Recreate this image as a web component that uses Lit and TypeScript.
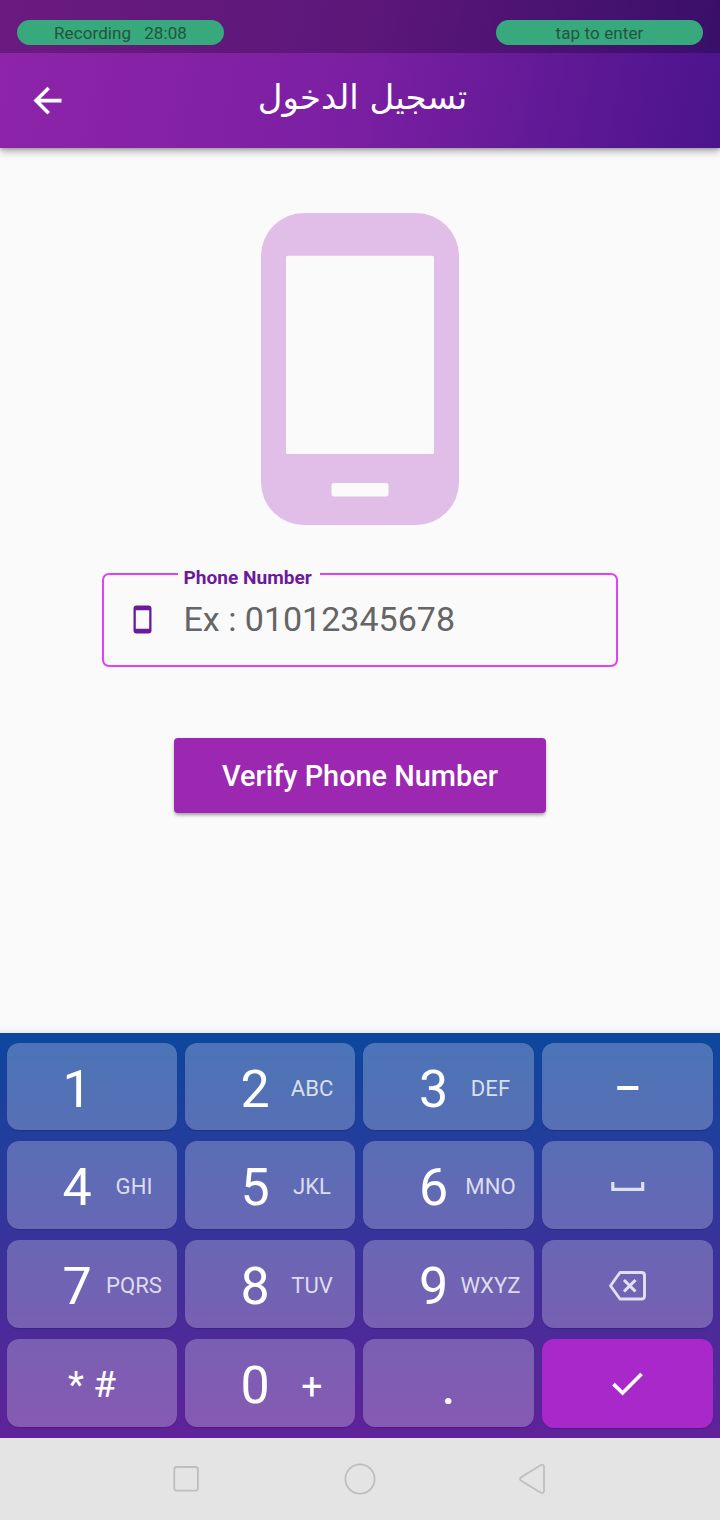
import { LitElement, html, css, svg } from "lit";
import { customElement } from "lit/decorators.js";
import { classMap } from "lit/directives/class-map.js";

interface Key {
  main?: string;
  sub?: string;
  kind?: string;
}

const KEYS: Key[] = [
  { main: "1" },
  { main: "2", sub: "ABC" },
  { main: "3", sub: "DEF" },
  { main: "–", kind: "dash" },
  { main: "4", sub: "GHI" },
  { main: "5", sub: "JKL" },
  { main: "6", sub: "MNO" },
  { kind: "space" },
  { main: "7", sub: "PQRS" },
  { main: "8", sub: "TUV" },
  { main: "9", sub: "WXYZ" },
  { kind: "delete" },
  { main: "* #", kind: "symbols" },
  { main: "0", sub: "+", kind: "zero" },
  { main: ".", kind: "dot" },
  { kind: "done" },
];

const ICONS: Record<string, unknown> = {
  space: svg`<path d="M12.800 25V32.300H42.700V25" stroke-width="3.200"/>`,
  delete: svg`<path d="M20 16.500H41.500Q44.500 16.500 44.500 19.500V40Q44.500 43 41.500 43H20L10.500 29.750Z" stroke-width="2.900" stroke-linejoin="round"/><path d="M24 24L35.500 35.500M35.500 24L24 35.500" stroke-width="3.100"/>`,
  done: svg`<path d="M13.500 28.200L22.600 37L41.500 18" stroke-width="3.700"/>`,
};

@customElement("keypad-view")
export class KeypadView extends LitElement {
  static styles = css`
    :host {
      display: block;
      height: 405px;
      box-sizing: border-box;
      padding: 10px 7px 11px;
      background: linear-gradient(#0d479e 0%, #263c9d 31%, #38339b 52%, #4d2a99 76%, #60229a 100%);
    }
    .keys {
      display: grid;
      height: 100%;
      grid-template-columns: 170px 170px 171px 171px;
      grid-template-rows: 87px 88px 88px 88px;
      column-gap: 8px;
      row-gap: 11px;
    }
    .key {
      display: grid;
      grid-template-columns: 50px 64px;
      padding-left: 45px;
      align-items: center;
      border-radius: 12px;
      background: rgba(255, 255, 255, 0.25);
      box-shadow: 0 1px 1px rgba(0, 0, 0, 0.18);
      color: #fff;
      text-align: center;
      white-space: nowrap;
    }
    .key:nth-child(4n + 3) {
      padding-left: 45.5px;
    }
    .main {
      font-size: 52px;
      line-height: 60px;
      padding-top: 6px;
    }
    .sub {
      font-size: 22.1px;
      line-height: 28px;
      padding-top: 2px;
      color: rgba(255, 255, 255, 0.78);
    }
    .key.dash,
    .key.space,
    .key.delete,
    .key.done,
    .key.symbols,
    .key.dot {
      grid-template-columns: 1fr;
      padding-left: 0;
      justify-items: center;
    }
    .dash .main,
    .symbols .main {
      font-size: 37px;
      line-height: 40px;
      padding-top: 4px;
    }
    .dash .main {
      font-size: 42px;
      font-weight: 500;
      padding-top: 5px;
    }
    .dot .main {
      font-size: 46px;
      font-weight: 500;
      padding-top: 10px;
    }
    .zero .sub {
      font-size: 37.5px;
      color: #fff;
      padding-top: 5px;
    }
    .key.done {
      height: 89px;
      background: #a928ca;
    }
    .icon {
      display: block;
      width: 56px;
      height: 56px;
      fill: none;
      stroke: rgba(255, 255, 255, 0.8);
    }
    .done .icon {
      stroke: #fff;
    }
  `;

  render() {
    return html`<div class="keys">
      ${KEYS.map((k) => {
        const icon = k.kind ? ICONS[k.kind] : undefined;
        return html`<div class=${classMap({ key: true, [k.kind ?? "digit"]: true })}>
          ${icon
            ? html`<svg class="icon" viewBox="0 0 56 56">${icon}</svg>`
            : html`<span class="main">${k.main}</span>`}
          ${k.sub ? html`<span class="sub">${k.sub}</span>` : ""}
        </div>`;
      })}
    </div>`;
  }
}

@customElement("app-root")
export class AppRoot extends LitElement {
  static styles = css`
    :host {
      display: flex;
      flex-direction: column;
      width: 720px;
      height: 1520px;
      overflow: hidden;
      background: #fafafa;
      font-family: Roboto, "Noto Sans", sans-serif;
    }
    .top {
      flex: none;
      height: 148px;
      background: linear-gradient(101.6deg, #8e24aa, #7b1fa2 50%, #4a148c);
      box-shadow: 0 4px 8px rgba(0, 0, 0, 0.24), 0 1px 4px rgba(0, 0, 0, 0.26);
    }
    .status {
      display: flex;
      justify-content: space-between;
      align-items: flex-start;
      height: 53px;
      box-sizing: border-box;
      padding: 20px 17px 0;
      background: rgba(0, 0, 0, 0.25);
    }
    .pill {
      width: 207px;
      height: 25px;
      border-radius: 13px;
      background: #37a97c;
      color: #245443;
      font-size: 17px;
      line-height: 27px;
      letter-spacing: 0.1px;
      text-align: center;
      white-space: pre;
    }
    .bar {
      display: grid;
      grid-template-columns: 96px 1fr 96px;
      height: 95px;
      align-items: center;
      color: #fff;
    }
    .back {
      width: 40px;
      height: 40px;
      margin-left: 28px;
    }
    .title {
      margin: 0;
      padding: 0 0 7px 5px;
      font: 400 34px/50px "DejaVu Sans", sans-serif;
      text-align: center;
      white-space: nowrap;
    }
    .body {
      flex: 1;
      display: flex;
      flex-direction: column;
      align-items: center;
      padding-top: 65px;
      box-shadow: inset 0 -9px 8px -8px rgba(0, 0, 0, 0.09);
    }
    .phone {
      display: block;
      width: 198px;
      height: 312px;
    }
    .field {
      box-sizing: border-box;
      width: 516px;
      height: 108px;
      min-inline-size: 0;
      margin: 34px 0 0;
      padding: 0 0 0 27px;
      border: 2px solid #df43f5;
      border-radius: 7px;
    }
    .legend {
      margin-left: 46.5px;
      padding: 8px 8px 0 6px;
      color: #6a1b9a;
      font-size: 19.1px;
      font-weight: 700;
      line-height: 22px;
    }
    .entry {
      display: flex;
      align-items: center;
      gap: 28.5px;
      height: 60px;
    }
    .mini {
      width: 24px;
      height: 30px;
    }
    .hint {
      color: #656565;
      font-size: 34px;
      line-height: 40px;
      white-space: nowrap;
    }
    .verify {
      width: 372px;
      height: 75px;
      margin-top: 71px;
      padding: 2px 0 0;
      border: 0;
      border-radius: 4px;
      background: #9c27b0;
      color: #fff;
      font: 500 28.9px/73px Roboto, sans-serif;
      box-shadow: 0 3px 3px -1px rgba(0, 0, 0, 0.2), 0 2px 4px rgba(0, 0, 0, 0.2);
    }
    .nav {
      flex: none;
      display: flex;
      justify-content: center;
      gap: 140px;
      height: 82px;
      align-items: center;
      background: #e4e4e4;
    }
    .nav svg {
      width: 34px;
      height: 34px;
      fill: none;
      stroke: #bebebe;
      stroke-width: 1.8;
      stroke-linejoin: round;
    }
  `;

  render() {
    return html`
      <header class="top">
        <div class="status">
          <div class="pill">Recording   28:08</div>
          <div class="pill">tap to enter</div>
        </div>
        <div class="bar">
          <svg class="back" viewBox="0 0 40 40" fill="none" stroke="#fff" stroke-width="3.6">
            <path d="M33.500 19.600H8M20.700 6.900L8 19.600L20.700 32.300" />
          </svg>
          <h1 class="title" dir="rtl" lang="ar">تسجيل الدخول</h1>
        </div>
      </header>
      <main class="body">
        <svg class="phone" viewBox="0 0 198 312">
          <path
            fill="#e1bee7"
            fill-rule="evenodd"
            d="M43 0H155A43 43 0 0 1 198 43V269A43 43 0 0 1 155 312H43A43 43 0 0 1 0 269V43A43 43 0 0 1 43 0ZM26.500 42.800Q25 42.800 25 44.300V239.500Q25 241 26.500 241H171.500Q173 241 173 239.500V44.300Q173 42.800 171.500 42.800ZM72.500 270Q70.500 270 70.500 272V281.500Q70.500 283.500 72.500 283.500H125.500Q127.500 283.500 127.500 281.500V272Q127.500 270 125.500 270Z"
          />
        </svg>
        <fieldset class="field">
          <legend class="legend">Phone Number</legend>
          <div class="entry">
            <svg class="mini" viewBox="0 0 24 30">
              <path
                fill="#6a1b9a"
                fill-rule="evenodd"
                d="M5.500 1.500H17.500Q20.500 1.500 20.500 4.500V26.500Q20.500 29.500 17.500 29.500H5.500Q2.500 29.500 2.500 26.500V4.500Q2.500 1.500 5.500 1.500ZM4.800 6.300V24.700H18.200V6.300Z"
              />
            </svg>
            <span class="hint">Ex : 01012345678</span>
          </div>
        </fieldset>
        <button class="verify">Verify Phone Number</button>
      </main>
      <keypad-view></keypad-view>
      <nav class="nav">
        <svg viewBox="0 0 34 34"><rect x="5.300" y="5" width="23.600" height="23.600" rx="2.500" /></svg>
        <svg viewBox="0 0 34 34"><circle cx="17" cy="17" r="14.600" /></svg>
        <svg viewBox="0 0 34 34">
          <path d="M23.500 3.200Q27 1.500 27 5V28.500Q27 32 23.500 30.500L4.500 19Q1.500 17 4.500 15Z" />
        </svg>
      </nav>
    `;
  }
}
